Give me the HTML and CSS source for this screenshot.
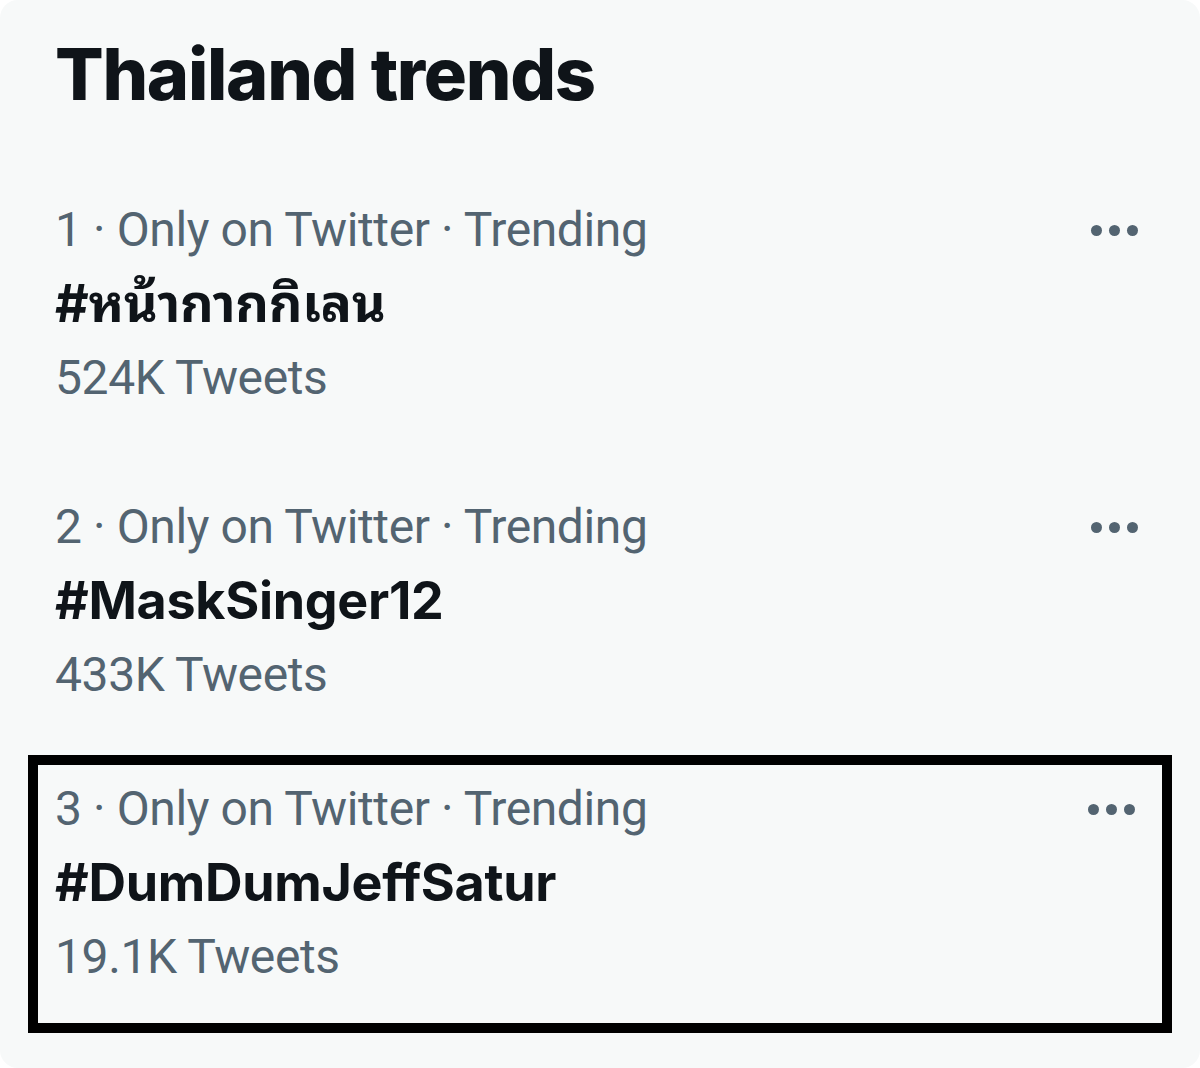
FILE: index.html
```html
<!DOCTYPE html>
<html>
<head>
<meta charset="utf-8">
<link rel="stylesheet" href="styles.css">
</head>
<body>
<div class="card">
  <h1 class="title">Thailand trends</h1>
  <div class="trend trend-1">
    <div class="meta-row">
      <span class="meta">1 · Only on Twitter · Trending</span>
      <span class="more"><i></i><i></i><i></i></span>
    </div>
    <div class="tag">#หน้ากากกิเลน</div>
    <div class="count">524K Tweets</div>
  </div>
  <div class="trend trend-2">
    <div class="meta-row">
      <span class="meta">2 · Only on Twitter · Trending</span>
      <span class="more"><i></i><i></i><i></i></span>
    </div>
    <div class="tag">#MaskSinger12</div>
    <div class="count">433K Tweets</div>
  </div>
  <div class="trend trend-3 boxed">
    <div class="meta-row">
      <span class="meta">3 · Only on Twitter · Trending</span>
      <span class="more"><i></i><i></i><i></i></span>
    </div>
    <div class="tag">#DumDumJeffSatur</div>
    <div class="count">19.1K Tweets</div>
  </div>
</div>
</body>
</html>
```
FILE: styles.css
```css
html, body {
  margin: 0;
  padding: 0;
  background: #ffffff;
}
.card {
  width: 1200px;
  height: 1068px;
  box-sizing: border-box;
  background: #f7f9f9;
  border-radius: 18px;
  padding: 29px 0 0 55px;
  font-family: Inter, "Noto Sans Thai Looped", "Noto Sans Thai", Tahoma, sans-serif;
  color: #0f1419;
  overflow: hidden;
}
.title {
  margin: 0;
  font-size: 72px;
  line-height: 90px;
  font-weight: 800;
  letter-spacing: -1.3px;
}
.trend {
  width: 1090px;
}
.trend-1 {
  margin-top: 74px;
}
.trend-2 {
  margin-top: 75px;
}
.boxed {
  margin-top: 43px;
  margin-left: -27px;
  width: 1144px;
  box-sizing: border-box;
  border: 10px solid #000000;
  padding: 7px 0 29px 17px;
}
.meta-row {
  display: flex;
  justify-content: space-between;
  align-items: center;
  height: 74px;
  padding-right: 7px;
}
.boxed .meta-row {
  padding-right: 27px;
}
.meta, .count {
  font-family: Roboto, "Noto Sans", sans-serif;
  font-size: 48px;
  line-height: 74px;
  color: #536471;
  font-weight: 400;
  letter-spacing: -0.4px;
}
.tag {
  font-size: 52px;
  line-height: 74px;
  font-weight: 700;
  letter-spacing: -0.3px;
}
.more {
  display: flex;
  gap: 7px;
}
.more i {
  display: block;
  width: 11px;
  height: 11px;
  border-radius: 50%;
  background: #536471;
}
```
